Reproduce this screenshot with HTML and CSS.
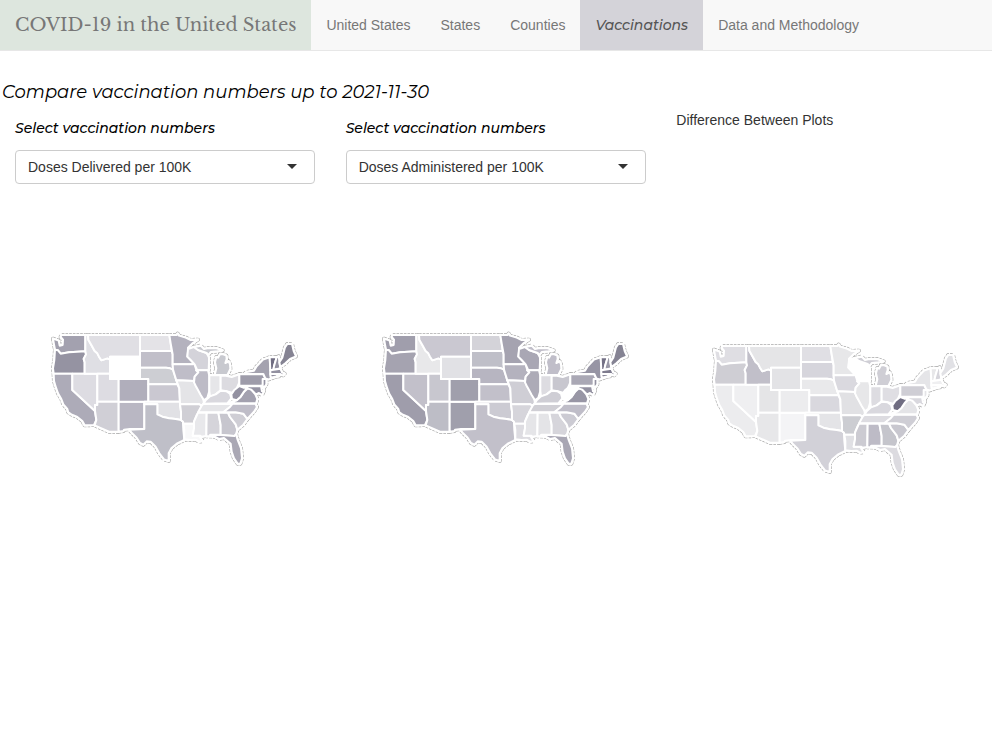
FILE: index.html
```html
<!DOCTYPE html>
<html lang="en">
<head>
<meta charset="utf-8">
<meta name="viewport" content="width=device-width, initial-scale=1">
<title>COVID-19 in the United States</title>
<link rel="stylesheet" href="styles.css">
</head>
<body>
<nav class="navbar">
  <a class="brand" href="#">COVID-19 in the United States</a>
  <ul class="nav">
    <li><a href="#us">United States</a></li>
    <li><a href="#states-tab">States</a></li>
    <li><a href="#counties">Counties</a></li>
    <li><a class="active" href="#vaccinations" aria-current="page">Vaccinations</a></li>
    <li><a href="#data">Data and Methodology</a></li>
  </ul>
</nav>

<svg class="defs" aria-hidden="true">
  <defs>
    <g id="states">
      <path class="wa" d="M27 41L44 47 47 62 56 60 57 44 50 36 52 30H124V79L100 80 75 82 50 86 42 76 33 74 30 58Z"/>
      <path class="or" d="M33 74L42 76 50 86 75 82 100 80 124 79 126 88 119 102 122 112V146H29L27 130 31 105Z"/>
      <path class="ca" d="M29 146H85V195L153 258 157 285 150 300 122 301 115 288 100 276 82 268 73 262 70 252 58 238 52 222 42 205 36 188 30 168Z"/>
      <path class="nv" d="M85 146H160V240H153V258L85 195Z"/>
      <path class="id" d="M124 30H132L133 44 142 60 152 78 160 85 165 95 172 106 190 100 198 104V146H122V112L119 102 126 88 124 79Z"/>
      <path class="mt" d="M132 30H288V95H198V104L190 100 172 106 165 95 160 85 152 78 142 60 133 44Z"/>
      <path class="ut" d="M160 146H198V162H224V230H160Z"/>
      <path class="az" d="M160 230H224V320H195L152 301 157 285 153 258V240H160Z"/>
      <path class="nm" d="M224 230H301V312H258L240 314 238 318 224 320Z"/>
      <path class="co" d="M224 162H313V230H224Z"/>
      <path class="nd" d="M288 30H376L380 55 383 78H288Z"/>
      <path class="sd" d="M288 78H383L386 88V118L387 134 378 130 366 128H288Z"/>
      <path class="ne" d="M288 128H366L378 130 387 134 392 150 397 166 403 178H313V162H288Z"/>
      <path class="ks" d="M313 178H400L406 190 408 230H313Z"/>
      <path class="wy" d="M198 95H288V162H198Z"/>
      <path class="ok" d="M301 230H408V238L411 260V285L395 282 375 280 355 275 340 268V238H301Z"/>
      <path class="tx" d="M301 238H340V268L355 275 375 280 395 282 411 285 417 290 418 315 421 345 398 356 382 370 374 385 374 408 360 403 346 385 335 365 320 350 308 349 298 359 288 354 278 338 262 322 256 314 301 312Z"/>
      <path class="mn" d="M376 30H398L401 26 405 32 425 38 440 45 462 44 445 55 432 68V80L430 95 440 105 452 118H386V88L380 55Z"/>
      <path class="ia" d="M386 118H452L456 132 463 142 452 155 450 168 397 166 392 150 387 134Z"/>
      <path class="mo" d="M397 166L450 168 455 182 466 198 478 222 480 235 473 242 466 238H408L406 190Z"/>
      <path class="ar" d="M408 238H466L473 242 468 255 458 270 450 290V296H418L417 290 411 285V260Z"/>
      <path class="la" d="M418 296H450V310L446 332H466L470 340 476 348 465 350 455 344 440 345 421 343V315Z"/>
      <path class="wi" d="M432 72L450 66 462 75 488 84 495 98 495 112 494 136H460L452 118 440 105 430 95Z"/>
      <path class="il" d="M456 136H492L496 152V198L490 218 480 226 470 210 455 182 450 172 452 155 463 142Z"/>
      <path class="mi" d="M450 66L470 62 480 72 490 70 515 69 536 76 520 79 500 81 493 90 488 84 462 75ZM512 150L517 130 513 112 517 96 522 98 528 88 536 87 547 92 548 102 544 114 554 109 558 118 559 132 550 150Z"/>
      <path class="in" d="M496 151H530V196L515 208 498 214 496 198Z"/>
      <path class="oh" d="M530 152H546L563 156 586 148V172L578 190 566 204 548 199 530 196Z"/>
      <path class="ky" d="M478 236L485 226 498 214 515 208 530 197 548 199 558 206 562 220 550 235Z"/>
      <path class="tn" d="M478 237L566 236 558 246 538 262H462L473 242Z"/>
      <path class="ms" d="M462 263H488L487 333 472 335 468 332H446L450 310V290Z"/>
      <path class="al" d="M488 263H523L530 300V329H499L497 334H487Z"/>
      <path class="ga" d="M523 263H552L558 276 575 298 580 314 576 328 571 333 530 330V300Z"/>
      <path class="fl" d="M499 330H530L571 333 576 328 581 345 591 370 594 400 589 416 581 416 570 400 563 380 560 356 540 339 525 342 512 335 499 334Z"/>
      <path class="sc" d="M552 263L575 262 598 266 610 282 598 299 580 314 575 298 558 276Z"/>
      <path class="nc" d="M566 236H634L639 246 630 260 610 282 598 266 575 262H538L558 246Z"/>
      <path class="va" d="M555 235L578 226 590 215 600 200 612 190 622 194 634 208 640 222 636 235Z"/>
      <path class="wv" d="M562 208L570 196 586 183 598 188 610 188 600 200 590 215 578 226 564 222Z"/>
      <path class="pa" d="M586 148H658L664 160 656 182H586Z"/>
      <path class="md" d="M610 184H652L654 198H660L654 210 645 204 636 208 622 194 610 190Z"/>
      <path class="de" d="M652 182L660 192 660 198H654Z"/>
      <path class="nj" d="M656 162L667 162 667 178 661 187 656 182Z"/>
      <path class="ny" d="M600 147L608 141 630 137 638 124 657 104 677 97 679 125 680 154 696 155 674 163 664 160 658 147Z"/>
      <path class="vt" d="M677 97H698L690 124 688 136H679Z"/>
      <path class="nh" d="M698 97L704 94 709 130 688 135 690 124Z"/>
      <path class="me" d="M706 112L715 98 723 67 730 57 744 57 749 78 756 94 738 102 724 115 709 126Z"/>
      <path class="ma" d="M679 136L709 131 714 142 722 146 718 151 706 147H679Z"/>
      <path class="ct" d="M679 147H700V154L680 158Z"/>
      <path class="ri" d="M700 147H708L705 154H700Z"/>
    </g>
    <g id="usa">
      <use class="coast" href="#states"/>
      <use class="shore" href="#states"/>
      <use class="fills" href="#states"/>
    </g>
  </defs>
</svg>

<main>
  <h4 class="title">Compare vaccination numbers up to 2021-11-30</h4>
  <div class="row">
    <section class="col">
      <label for="first">Select vaccination numbers</label>
      <div class="picker">
        <select id="first"><option>Doses Delivered per 100K</option><option>Doses Administered per 100K</option></select>
      </div>
      <svg class="map delivered" viewBox="0 0 780 450" role="img" aria-label="Doses Delivered per 100K"><use href="#usa"/></svg>
    </section>
    <section class="col">
      <label for="second">Select vaccination numbers</label>
      <div class="picker">
        <select id="second"><option>Doses Administered per 100K</option><option>Doses Delivered per 100K</option></select>
      </div>
      <svg class="map administered" viewBox="0 0 780 450" role="img" aria-label="Doses Administered per 100K"><use href="#usa"/></svg>
    </section>
    <section class="col">
      <p class="caption">Difference Between Plots</p>
      <svg class="map difference" viewBox="0 0 780 450" role="img" aria-label="Difference Between Plots"><use href="#usa"/></svg>
    </section>
  </div>
</main>
</body>
</html>
```
FILE: styles.css
```css
* { box-sizing: border-box; }

body {
  margin: 0;
  background: #fff;
  color: #333;
  font: 14px/20px "Liberation Sans", Arial, sans-serif;
}

.navbar {
  display: flex;
  background: #f8f8f8;
  border-bottom: 1px solid #e7e7e7;
}

.navbar a { color: #777; text-decoration: none; }

.navbar .brand {
  padding: 15px;
  background: #dde6de;
  font: 18px/20px "Libre Baskerville", "Liberation Serif", serif;
  white-space: nowrap;
}

.nav {
  display: flex;
  margin: 0;
  padding: 0;
  list-style: none;
}

.nav a { display: block; padding: 15px; white-space: nowrap; }

.navbar .active {
  background: #d4d3d9;
  color: #555;
  font-family: Montserrat, Inter, sans-serif;
  font-style: italic;
  font-weight: 500;
}

.title {
  margin: 30px 0 7px;
  padding-left: 2px;
  color: #000;
  font: italic 400 18px/22px Montserrat, Inter, sans-serif;
}

.row { display: grid; grid-template-columns: repeat(3, 1fr); }

.col { padding: 0 15px; }

.col label {
  display: block;
  margin: 8px 0 12px;
  color: #000;
  font: italic 500 14px/20px Montserrat, Inter, sans-serif;
}

.picker { position: relative; max-width: 300px; }

.picker::after {
  content: "";
  position: absolute;
  top: 14px;
  right: 18px;
  border: 5px solid transparent;
  border-top-color: #333;
  border-bottom: 0;
  pointer-events: none;
}

.picker select {
  display: block;
  appearance: none;
  width: 100%;
  height: 34px;
  padding: 0 12px;
  border: 1px solid #ccc;
  border-radius: 4px;
  background: #fff;
  color: #333;
  font: inherit;
}

.caption { margin: 0; }

.map {
  display: block;
  width: 260px;
  max-width: 100%;
  margin: 141px 0 0 29px;
}

.caption + .map { margin-top: 206px; }

.defs { position: absolute; width: 0; height: 0; }

/* State outlines: dashed coast, white halo, then the filled states */
.coast {
  fill-opacity: 0;
  stroke: #aaa;
  stroke-width: 12;
  stroke-dasharray: 8 3;
  stroke-linejoin: round;
}

.shore {
  fill-opacity: 0;
  stroke: #fff;
  stroke-width: 8;
  stroke-linejoin: round;
}

.fills {
  stroke: #fff;
  stroke-width: 6;
  stroke-linejoin: round;
}

.wa { fill: var(--wa); } .or { fill: var(--or); } .ca { fill: var(--ca); }
.nv { fill: var(--nv); } .id { fill: var(--id); } .mt { fill: var(--mt); }
.ut { fill: var(--ut); } .az { fill: var(--az); } .nm { fill: var(--nm); }
.co { fill: var(--co); } .wy { fill: var(--wy); } .nd { fill: var(--nd); }
.sd { fill: var(--sd); } .ne { fill: var(--ne); } .ks { fill: var(--ks); }
.ok { fill: var(--ok); } .tx { fill: var(--tx); } .mn { fill: var(--mn); }
.ia { fill: var(--ia); } .mo { fill: var(--mo); } .ar { fill: var(--ar); }
.la { fill: var(--la); } .wi { fill: var(--wi); } .il { fill: var(--il); }
.mi { fill: var(--mi); } .in { fill: var(--in); } .oh { fill: var(--oh); }
.ky { fill: var(--ky); } .tn { fill: var(--tn); } .ms { fill: var(--ms); }
.al { fill: var(--al); } .ga { fill: var(--ga); } .fl { fill: var(--fl); }
.sc { fill: var(--sc); } .nc { fill: var(--nc); } .va { fill: var(--va); }
.wv { fill: var(--wv); } .pa { fill: var(--pa); } .md { fill: var(--md); }
.de { fill: var(--de); } .nj { fill: var(--nj); } .ny { fill: var(--ny); }
.vt { fill: var(--vt); } .nh { fill: var(--nh); } .me { fill: var(--me); }
.ma { fill: var(--ma); } .ct { fill: var(--ct); } .ri { fill: var(--ri); }

.delivered {
  --wa: #a3a1af; --or: #9593a2; --ca: #adabb8; --nv: #dddce2; --id: #dfdfe4;
  --mt: #e0dfe4; --ut: #dddce2; --az: #d0cfd6; --nm: #b9b7c3; --co: #b0aebb;
  --wy: #fff; --nd: #e4e3e7; --sd: #c1bfc9; --ne: #cdced3; --ks: #cac8d1;
  --ok: #e1e1e5; --tx: #bfbfc8; --mn: #b4b2be; --ia: #bfbdc8; --mo: #e4e4e7;
  --ar: #d0cfd5; --la: #f8f8f9; --wi: #d4d3da; --il: #bdbbc6; --mi: #c8c9cf;
  --in: #e6e6e9; --oh: #dcdbe0; --ky: #d9d8de; --tn: #e5e5e8; --ms: #e8e8eb;
  --al: #d5d4da; --ga: #c7c6ce; --fl: #aaa8b4; --sc: #cfced5; --nc: #bfbdc8;
  --va: #a3a1af; --wv: #9391a1; --pa: #9e9caa; --md: #9694a4; --de: #9694a4;
  --nj: #9694a4; --ny: #a4a2af; --vt: #706d82; --nh: #9290a0; --me: #858393;
  --ma: #9391a1; --ct: #9391a1; --ri: #858393;
}

.administered {
  --wa: #a09eac; --or: #a5a3b0; --ca: #9f9dab; --nv: #c2c0ca; --id: #e8e8ea;
  --mt: #cac8d1; --ut: #c8c7cf; --az: #bdbdc6; --nm: #a09fac; --co: #a09fac;
  --wy: #e1e1e5; --nd: #d4d3d9; --sd: #bfbfc8; --ne: #b7b5c1; --ks: #c2c0ca;
  --ok: #cccbd3; --tx: #c2c0ca; --mn: #a5a3b0; --ia: #b4b2be; --mo: #cfced5;
  --ar: #d6d5db; --la: #dddce1; --wi: #a9a7b4; --il: #adabb7; --mi: #c0bec9;
  --in: #dddce1; --oh: #c8c7cf; --ky: #cfced5; --tn: #d0cfd5; --ms: #e5e5e8;
  --al: #e4e4e7; --ga: #d6d5db; --fl: #a9a7b4; --sc: #cccbd3; --nc: #bfbdc8;
  --va: #9896a5; --wv: #fff; --pa: #aaa8b5; --md: #9391a1; --de: #a3a1af;
  --nj: #9391a1; --ny: #9795a4; --vt: #747186; --nh: #9b99a8; --me: #858393;
  --ma: #7e7b8e; --ct: #8a889a; --ri: #7e7b8e;
}

.difference {
  --wa: #dfdee3; --or: #cfced4; --ca: #ececee; --nv: #efeff1; --id: #c1bfc9;
  --mt: #e5e5e7; --ut: #e5e5e7; --az: #e7e7e9; --nm: #f4f4f6; --co: #ececee;
  --wy: #e3e3e6; --nd: #e0dfe4; --sd: #d6d5dc; --ne: #e9e9eb; --ks: #d9d8de;
  --ok: #e4e4e7; --tx: #d2d1d8; --mn: #e7e7e9; --ia: #dad9df; --mo: #e1e1e4;
  --ar: #cccdd2; --la: #e0e0e4; --wi: #fff; --il: #e7e7e9; --mi: #cfced5;
  --in: #dddce1; --oh: #dfdee3; --ky: #d9d8de; --tn: #dddce1; --ms: #cccbd2;
  --al: #bdbbc6; --ga: #c5c5cc; --fl: #dcdbe0; --sc: #c8c7cf; --nc: #cfced5;
  --va: #e4e4e7; --wv: #706d82; --pa: #cfced5; --md: #d9d8de; --de: #cfced5;
  --nj: #e4e4e7; --ny: #e5e5e8; --vt: #e7e7e9; --nh: #d6d5db; --me: #e1e1e5;
  --ma: #efeff1; --ct: #f4f4f6; --ri: #e7e7e9;
}
```
